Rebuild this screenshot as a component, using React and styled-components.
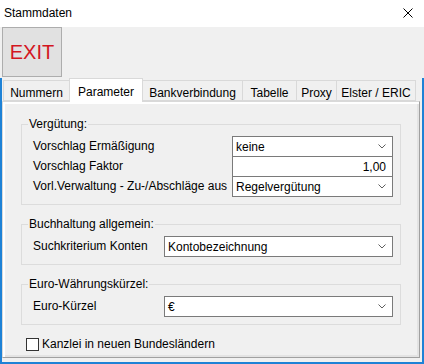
import React from "react";
import styled, { createGlobalStyle } from "styled-components";

const GlobalStyle = createGlobalStyle`
  html, body {
    margin: 0;
    padding: 0;
    background: #ffffff;
  }
  body {
    font-family: "Liberation Sans", Arial, sans-serif;
    font-size: 12px;
    color: #000;
  }
  * {
    box-sizing: border-box;
  }
`;

const Window = styled.div`
  width: 424px;
  height: 364px;
  display: flex;
  flex-direction: column;
  background: #f0f0f0;
  overflow: hidden;
`;

const TitleBar = styled.div`
  height: 27px;
  flex: none;
  background: #ffffff;
  display: flex;
  align-items: center;
  justify-content: space-between;
  padding: 0 11px 1px 4px;
`;

const Title = styled.span`
  font-size: 12px;
  line-height: 14px;
`;

const Toolbar = styled.div`
  height: 51px;
  flex: none;
  display: flex;
  align-items: flex-start;
  padding-left: 2px;
`;

const ExitButton = styled.button`
  width: 60px;
  height: 50px;
  padding: 0;
  background: #e1e1e1;
  border: 1px solid #adadad;
  color: #d3161f;
  font-family: "Liberation Sans", Arial, sans-serif;
  font-size: 20px;
  line-height: 22px;
`;

const Body = styled.div`
  flex: 1;
  display: flex;
  flex-direction: column;
  border: 2px solid #1e82d6;
  border-top: none;
`;

const TabStrip = styled.div`
  height: 23px;
  flex: none;
  display: flex;
  align-items: flex-end;
  padding-left: 1px;
`;

const Tab = styled.div`
  position: relative;
  width: ${(p) => p.$w}px;
  height: ${(p) => (p.$active ? 24 : 21)}px;
  margin-left: -1px;
  margin-bottom: ${(p) => (p.$active ? -1 : 0)}px;
  z-index: ${(p) => (p.$active ? 2 : 1)};
  padding-top: ${(p) => (p.$active ? 6 : 5)}px;
  text-align: center;
  line-height: 14px;
  white-space: nowrap;
  background: ${(p) => (p.$active ? "#ffffff" : "#f0f0f0")};
  border: 1px solid #d9d9d9;
  border-bottom: ${(p) => (p.$active ? "none" : "1px solid #d9d9d9")};

  &:first-child {
    margin-left: 0;
  }
`;

const TabPage = styled.div`
  width: 418px;
  height: 257px;
  flex: none;
  background: #f0f0f0;
  border: 1px solid #d9d9d9;
  border-right-color: #a0a0a0;
  border-bottom-color: #a0a0a0;
  box-shadow: inset 2px 2px 0 #ffffff, inset -2px -2px 0 #e3e3e3;
  padding: 15px 18px 0 18px;
`;

const Group = styled.fieldset`
  margin: ${(p) => (p.$first ? 0 : 12)}px 0 0 0;
  padding: 0 7px 7px 0;
  border: 1px solid #dcdcdc;
  min-width: 0;
`;

const Legend = styled.legend`
  margin-left: 6px;
  padding: 0 1px;
  line-height: 14px;
  font-size: 12px;
`;

const Rows = styled.div`
  display: grid;
  grid-template-columns: ${(p) => p.$label}px 1fr;
  grid-template-rows: ${(p) => p.$rows};
  align-items: start;
  padding: 5px 0 0 11px;
`;

const Label = styled.div`
  height: 20px;
  line-height: 20px;
  white-space: nowrap;
`;

const Field = styled.div`
  height: 21px;
  display: flex;
  align-items: center;
  justify-content: ${(p) => (p.$right ? "flex-end" : "space-between")};
  background: #ffffff;
  border: 1px solid #7a7a7a;
  padding: 0 6px 0 3px;
  line-height: 14px;
  white-space: nowrap;
  position: relative;
`;

const CheckRow = styled.label`
  display: flex;
  align-items: center;
  gap: 3px;
  margin: 12px 0 0 5px;
  line-height: 14px;
`;

const CheckBox = styled.span`
  width: 13px;
  height: 13px;
  flex: none;
  background: #ffffff;
  border: 1px solid #333333;
`;

const Chevron = () => (
  <svg width="8" height="5" viewBox="0 0 8 5">
    <polyline points="0.5,0.5 4,4 7.5,0.5" fill="none" stroke="#5f5f5f" strokeWidth="1" />
  </svg>
);

const CloseIcon = () => (
  <svg width="10" height="10" viewBox="0 0 10 10">
    <path d="M0.5 0.5 L9.5 9.5 M9.5 0.5 L0.5 9.5" stroke="#000" strokeWidth="1" />
  </svg>
);

const Combo = ({ value }) => (
  <Field>
    <span>{value}</span>
    <Chevron />
  </Field>
);

const tabs = [
  { label: "Nummern", w: 67 },
  { label: "Parameter", w: 74, active: true },
  { label: "Bankverbindung", w: 101 },
  { label: "Tabelle", w: 55 },
  { label: "Proxy", w: 41 },
  { label: "Elster / ERIC", w: 80 },
];

export default function App() {
  return (
    <>
      <GlobalStyle />
      <Window>
        <TitleBar>
          <Title>Stammdaten</Title>
          <CloseIcon />
        </TitleBar>
        <Toolbar>
          <ExitButton>EXIT</ExitButton>
        </Toolbar>
        <Body>
          <TabStrip>
            {tabs.map((t) => (
              <Tab key={t.label} $w={t.w} $active={t.active}>
                {t.label}
              </Tab>
            ))}
          </TabStrip>
          <TabPage>
            <Group $first>
              <Legend>Vergütung:</Legend>
              <Rows $label={199} $rows="20px 20px 21px">
                <Label>Vorschlag Ermäßigung</Label>
                <Combo value="keine" />
                <Label>Vorschlag Faktor</Label>
                <Field $right>1,00</Field>
                <Label>Vorl.Verwaltung - Zu-/Abschläge aus</Label>
                <Combo value="Regelvergütung" />
              </Rows>
            </Group>
            <Group>
              <Legend>Buchhaltung allgemein:</Legend>
              <Rows $label={131} $rows="21px">
                <Label>Suchkriterium Konten</Label>
                <Combo value="Kontobezeichnung" />
              </Rows>
            </Group>
            <Group>
              <Legend>Euro-Währungskürzel:</Legend>
              <Rows $label={131} $rows="21px">
                <Label>Euro-Kürzel</Label>
                <Combo value="€" />
              </Rows>
            </Group>
            <CheckRow>
              <CheckBox />
              Kanzlei in neuen Bundesländern
            </CheckRow>
          </TabPage>
        </Body>
      </Window>
    </>
  );
}
